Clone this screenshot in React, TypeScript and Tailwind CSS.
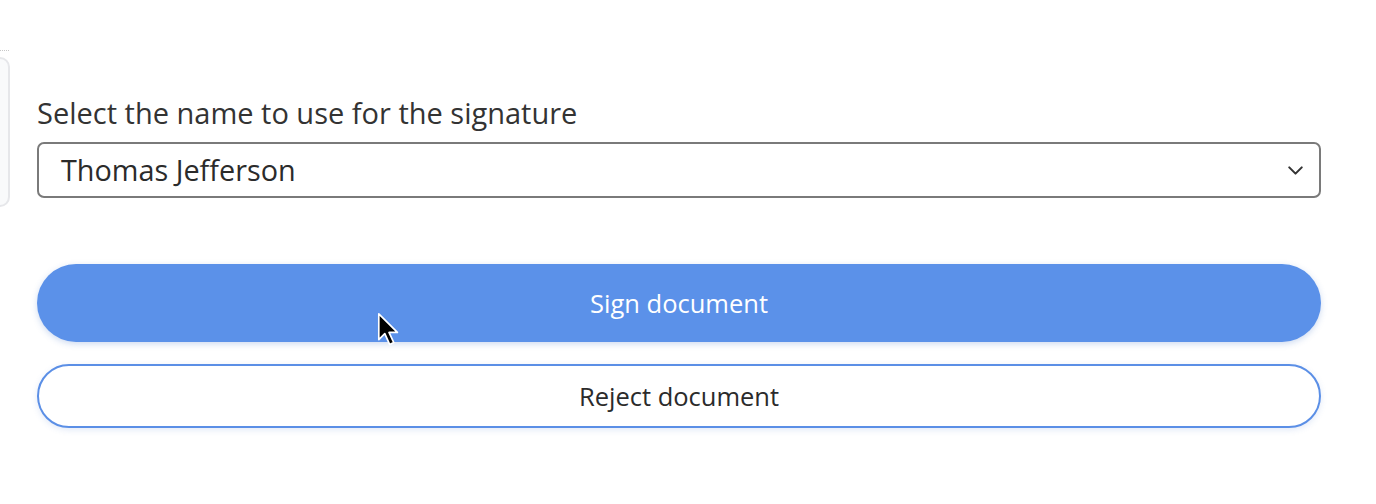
import { ChevronDown } from "lucide-react"

function App() {
  return (
    <div className="relative h-[504px] w-[1376px] overflow-hidden bg-white font-['Open_Sans',sans-serif] text-[#2b2b2b]">
      {/* bit of the card on the left */}
      <div className="absolute left-0 top-[50px] w-[9px] border-t border-dotted border-[#c8c8c8]" />
      <div className="absolute left-[-20px] top-[57px] h-[150px] w-[30px] rounded-[10px] border-2 border-[#e6e7ea] bg-[#f9fafb]" />

      <div className="ml-[37px] w-[1284px] pt-[94px]">
        <label className="block text-[29px] leading-[38px] text-[#333]">
          Select the name to use for the signature
        </label>
        <div className="mt-[10px] flex h-[56px] items-center justify-between rounded-[7px] border-2 border-[#7a7a7a] pl-[22px] pr-[11px]">
          <span className="text-[28.8px] text-[#2b2b2b]">Thomas Jefferson</span>
          <ChevronDown size={25} strokeWidth={2} className="text-[#333]" />
        </div>

        <button className="mt-[66px] flex h-[78px] w-full items-center justify-center rounded-full bg-[#5b91e9] text-[25.5px] text-white shadow-[0_2px_6px_rgba(60,110,200,0.25)]">
          Sign document
        </button>
        <button className="mt-[22px] flex h-[64px] w-full items-center justify-center rounded-full border-2 border-[#5b8fe6] bg-white text-[25.5px] text-[#2b2b2b] shadow-[0_2px_6px_rgba(60,110,200,0.15)]">
          Reject document
        </button>
      </div>

      {/* mouse pointer */}
      <svg className="absolute left-[377px] top-[312px]" width="24" height="36" viewBox="0 0 20 30">
        <path d="M1.5 1.5 L1.5 23 L6.5 18 L10.5 27 L14 25.5 L10 17 L17 17 Z" fill="#000" stroke="#fff" strokeWidth="1.4" strokeLinejoin="round" />
      </svg>
    </div>
  )
}

export default App
